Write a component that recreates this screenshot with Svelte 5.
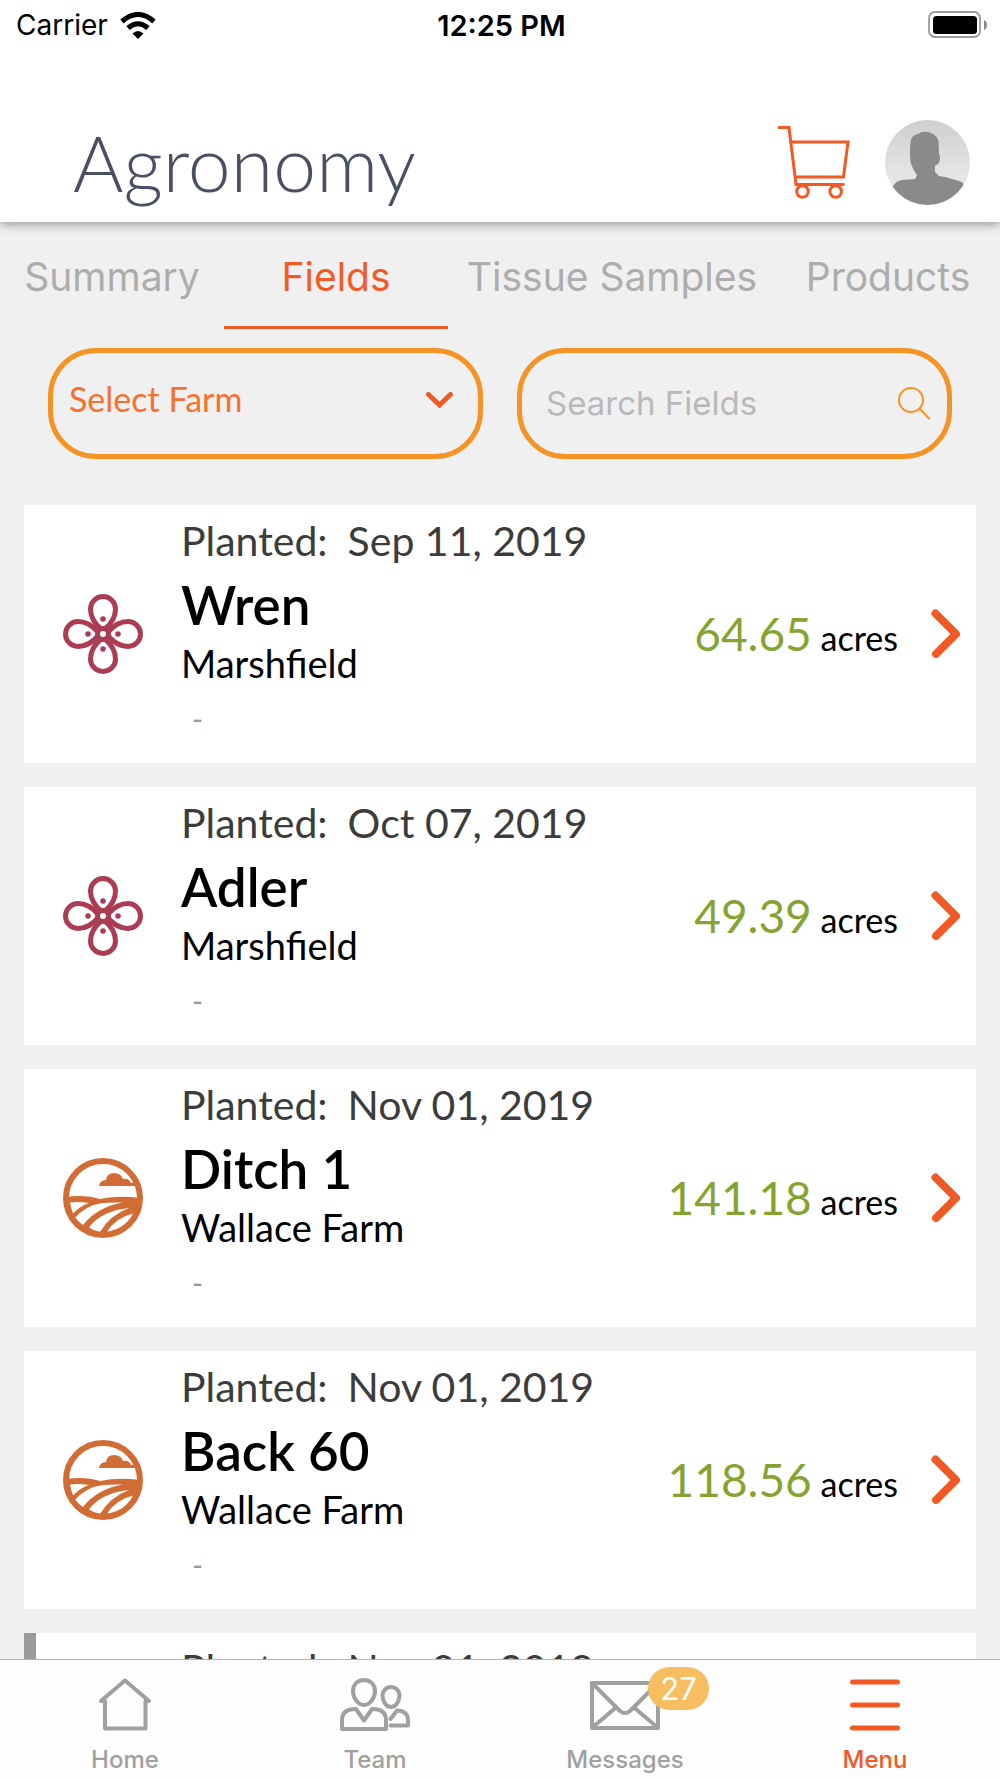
<script lang="ts">
  interface Field {
    planted: string;
    name?: string;
    farm?: string;
    acres?: string;
    crop: "cotton" | "land";
    flagged?: boolean;
  }

  const tabs = ["Summary", "Fields", "Tissue Samples", "Products"];
  const nav = ["Home", "Team", "Messages", "Menu"];

  const fields: Field[] = [
    { planted: "Sep 11, 2019", name: "Wren", farm: "Marshfield", acres: "64.65", crop: "cotton" },
    { planted: "Oct 07, 2019", name: "Adler", farm: "Marshfield", acres: "49.39", crop: "cotton" },
    { planted: "Nov 01, 2019", name: "Ditch 1", farm: "Wallace Farm", acres: "141.18", crop: "land" },
    { planted: "Nov 01, 2019", name: "Back 60", farm: "Wallace Farm", acres: "118.56", crop: "land" },
    { planted: "Nov 01, 2019", crop: "land", flagged: true },
  ];

  let activeTab = $state("Fields");
  let activeNav = $state("Menu");
  let farm = $state("");
  let query = $state("");
  let unread = 27;

  let visible = $derived(
    fields.filter(
      (f) => (!farm || f.farm === farm) && (f.name ?? "").toLowerCase().includes(query.toLowerCase())
    )
  );
</script>

<div class="app">
  <header class="top">
    <div class="status">
      <span class="status__carrier">
        Carrier
        <svg class="wifi" viewBox="0 0 36 27" aria-hidden="true">
          <path d="M2 9.500 Q18 -4.500 34 9.500" />
          <path d="M8 16 Q18 7.500 28 16" />
          <path class="wifi__dot" d="M12.500 21.500 Q18 16.500 23.500 21.500 L18 27 Z" />
        </svg>
      </span>
      <span class="status__time">12:25 PM</span>
      <svg class="battery" viewBox="0 0 59 28" aria-hidden="true">
        <rect x="1" y="1" width="51" height="25" rx="6" fill="#fff" stroke="#999" stroke-width="1.800" />
        <rect x="5" y="5" width="44" height="18" rx="3.500" />
        <path d="M56 9 Q59 10.500 59 14 T56 19 Z" fill="#888" />
      </svg>
    </div>

    <div class="title">
      <h1>Agronomy</h1>
      <button type="button" class="plain" aria-label="Cart">
        <svg class="cart" viewBox="0 0 72 73" aria-hidden="true">
          <path d="M0 1.500 H11 L18 58.500 H66.500 M13 16 H70 L65.500 51 H17" />
          <circle cx="24.500" cy="65.500" r="5.800" />
          <circle cx="57.700" cy="65.500" r="5.800" />
        </svg>
      </button>
      <button type="button" class="plain" aria-label="Profile">
        <svg class="avatar" viewBox="0 0 85 85" aria-hidden="true">
          <defs>
            <linearGradient id="avatar-bg" x1="0" y1="0" x2="0" y2="1">
              <stop offset="0" stop-color="#cfcfcf" />
              <stop offset="0.800" stop-color="#eaeaea" />
            </linearGradient>
            <clipPath id="avatar-clip"><circle cx="42.500" cy="42.500" r="42.500" /></clipPath>
          </defs>
          <g clip-path="url(#avatar-clip)">
            <rect width="85" height="85" fill="url(#avatar-bg)" />
            <path
              fill="#8a8a8a"
              d="M32 55 Q27 48 25.500 42 Q24 30 26 20 Q27 15 33 14 Q38 10.500 45 12.500 Q52 15 53.500 21 L54 34 Q56 37 54 43 L50 46 V52 L54 56 Q62 57 67 59 Q75 61 78 63 L85 85 H0 L8 66 Q11 61 17 60 L30 59 Z"
            />
          </g>
        </svg>
      </button>
    </div>
  </header>

  <div class="tabs" role="tablist">
    {#each tabs as tab (tab)}
      <button
        type="button"
        class="tab"
        class:tab--active={tab === activeTab}
        role="tab"
        aria-selected={tab === activeTab}
        onclick={() => (activeTab = tab)}
      >
        {tab}
      </button>
    {/each}
  </div>

  <div class="filters">
    <div class="pill">
      <select class="pill__select" bind:value={farm} aria-label="Farm">
        <option value="">Select Farm</option>
        <option>Marshfield</option>
        <option>Wallace Farm</option>
      </select>
      <svg class="caret" viewBox="0 0 27 16" aria-hidden="true">
        <path d="M2.500 2.500 L13.500 13 L24.500 2.500" />
      </svg>
    </div>
    <div class="pill">
      <input class="pill__input" type="text" placeholder="Search Fields" bind:value={query} aria-label="Search Fields" />
      <svg class="lens" viewBox="0 0 32 33" aria-hidden="true">
        <circle cx="13" cy="13" r="12" />
        <path d="M21.500 21.500 L31 31.500" />
      </svg>
    </div>
  </div>

  <main class="list">
    {#each visible as field}
      <a class="card" class:card--flagged={field.flagged} href="#field">
        {#if field.crop === "cotton"}
          <svg class="crop" viewBox="0 0 80 80" aria-hidden="true">
            {#each [0, 90, 180, 270] as angle}
              <g transform="rotate({angle} 40 40)">
                <path
                  d="M38 35 C31 29 27.500 21 27.500 15 a12.500 12.500 0 0 1 25 0 C52.500 21 49 29 42 35"
                  fill="none"
                  stroke="#aa3c54"
                  stroke-width="5"
                />
                <circle cx="40" cy="25" r="2.800" fill="#aa3c54" />
              </g>
            {/each}
            <circle cx="40" cy="40" r="5.500" fill="#fff" stroke="#aa3c54" stroke-width="5" />
          </svg>
        {:else}
          <svg class="crop" viewBox="0 0 80 80" aria-hidden="true">
            <path
              fill="#d16c35"
              d="M3 39 Q22 36 37 41 Q56 37 77 40 A37 37 0 0 1 3 41 Z M36 28 Q37 22 43 22 Q44 15 51 15 Q58 15 60 21 Q66 20 68 25 L72 24 L74 28 Z"
            />
            <g fill="#fff">
              <path d="M7 44.500 Q16 43.500 26 45 Q17 48 10 55.500 Q8 50 7 44.500 Z" />
              <path d="M12 60 Q22 48 37 45.500 Q48 44 60 44.500 Q34 49 20 67 Q15 64 12 60 Z" />
              <path d="M26 69.500 Q38 53 66 50 Q47 57 37 74 Q31 73 26 69.500 Z" />
              <path d="M44 74 Q52 60 70 55.500 Q64 71 44 74 Z" />
            </g>
            <circle cx="40" cy="40" r="37" fill="none" stroke="#d16c35" stroke-width="6" />
          </svg>
        {/if}
        <div class="info">
          <p class="info__planted"><span>Planted:</span><span>{field.planted}</span></p>
          <h2 class="info__name">{field.name}</h2>
          <p class="info__farm">{field.farm}</p>
          <p class="info__note">{field.name ? "-" : ""}</p>
        </div>
        {#if field.acres}
          <p class="area"><span class="area__value">{field.acres}</span> acres</p>
        {/if}
        <svg class="chevron" viewBox="0 0 30 50" aria-hidden="true">
          <path d="M4.500 4.500 L25 25 L5 45" />
        </svg>
      </a>
    {/each}
  </main>

  <nav class="bar">
    {#each nav as item (item)}
      <button
        type="button"
        class="bar__item"
        class:bar__item--active={item === activeNav}
        onclick={() => (activeNav = item)}
      >
        <span class="bar__icon">
          {#if item === "Home"}
            <svg width="52" height="53" viewBox="0 0 52 53" aria-hidden="true">
              <path d="M2 23 L26 2.500 L50 23 H46.500 V50.500 H6 V23 Z" />
            </svg>
          {:else if item === "Team"}
            <svg width="70" height="53" viewBox="0 0 70 53" aria-hidden="true">
              <path d="M24 2 C31 2 35 7 35 13 C35 20 30 27 24 27 S13 20 13 13 C13 7 17 2 24 2 Z" />
              <path d="M2 51 V42 C2 34 8 31 16 31 L24 42.500 L32 31 C40 31 46 34 46 42 V51 Z" />
              <path d="M51 9 C56 9 59.500 13 59.500 17.500 C59.500 23 56 29 51 29 S42.500 23 42.500 17.500 C42.500 13 46 9 51 9 Z" />
              <path d="M50.500 41 L57 32.500 C64 32.500 68 36 68 42 V47.500 H50.500" />
            </svg>
          {:else if item === "Messages"}
            <svg width="70" height="53" viewBox="0 0 70 53" aria-hidden="true">
              <rect x="2" y="5" width="66" height="45" />
              <path d="M2 5 L30 33 Q35 37 40 33 L68 5 M3 49 L26 29.500 M67 49 L44 29.500" />
            </svg>
            <span class="badge">{unread}</span>
          {:else}
            <svg width="50" height="53" viewBox="0 0 50 53" aria-hidden="true">
              <path d="M2.500 4 H47.500 M2.500 27 H47.500 M2.500 50 H47.500" stroke-width="5" />
            </svg>
          {/if}
        </span>
        {item}
      </button>
    {/each}
  </nav>
</div>

<style>
  :global(body) {
    margin: 0;
    background: #f0f0f0;
  }

  .app {
    display: flex;
    flex-direction: column;
    height: 100vh;
    overflow: hidden;
    font-family: Lato, "Open Sans", sans-serif;
    color: #000;
  }

  .app * {
    box-sizing: border-box;
  }

  h1,
  h2,
  p {
    margin: 0;
    font-weight: 400;
  }

  button {
    border: 0;
    background: none;
    cursor: pointer;
  }

  svg {
    display: block;
    flex: none;
  }

  /* ── Header ── */
  .top {
    position: relative;
    background: #fff;
    box-shadow: 0 2px 10px rgba(0, 0, 0, 0.4);
  }

  .status {
    display: grid;
    grid-template-columns: 1fr auto 1fr;
    align-items: center;
    height: 50px;
    padding: 0 13px 0 16px;
    font-family: Inter, sans-serif;
    font-size: 28px;
  }

  .status__carrier {
    display: flex;
    align-items: center;
    gap: 12px;
  }

  .status__time {
    font-size: 29px;
    font-weight: 600;
  }

  .wifi {
    width: 36px;
    height: 27px;
    fill: none;
    stroke: #000;
    stroke-width: 5;
  }

  .wifi__dot {
    fill: #000;
    stroke: none;
  }

  .battery {
    width: 59px;
    height: 28px;
    justify-self: end;
  }

  .title {
    display: flex;
    align-items: center;
    gap: 35px;
    padding: 66px 30px 14px 73px;
  }

  .title h1 {
    flex: 1;
    font-size: 77px;
    font-weight: 300;
    line-height: 92px;
    color: #4a5064;
  }

  .plain {
    padding: 0;
  }

  .cart {
    width: 72px;
    height: 73px;
    fill: none;
    stroke: #f15a24;
    stroke-width: 3;
  }

  .avatar {
    width: 85px;
    height: 85px;
  }

  /* ── Tabs ── */
  .tabs {
    display: grid;
    grid-template-columns: 56fr 56fr 82fr 56fr;
    height: 107px;
  }

  .tab {
    padding: 4px 0 0;
    border-bottom: 3px solid transparent;
    font-family: Inter, sans-serif;
    font-size: 39px;
    white-space: nowrap;
    color: #adadad;
  }

  .tab--active {
    border-color: #f15a24;
    color: #f15a24;
  }

  /* ── Filters ── */
  .filters {
    display: grid;
    grid-template-columns: repeat(2, minmax(0, 1fr));
    gap: 34px;
    padding: 19px 48px 46px;
  }

  .pill {
    display: flex;
    align-items: center;
    height: 111px;
    padding: 0 17px 0 16px;
    border: 5px solid #f59324;
    border-radius: 48px;
  }

  .pill__select,
  .pill__input {
    flex: 1;
    min-width: 0;
    height: 100%;
    padding: 0;
    border: 0;
    outline: 0;
    background: none;
  }

  .pill__select {
    appearance: none;
    padding-bottom: 10px;
    font-family: Lato, sans-serif;
    font-size: 34px;
    color: #f7702e;
  }

  .pill__input {
    padding: 0 0 2px 8px;
    font-family: Inter, sans-serif;
    font-size: 33px;
  }

  .pill__input::placeholder {
    color: #b9b9bb;
    opacity: 1;
  }

  .caret {
    width: 27px;
    height: 16px;
    margin: 0 8px 8px 0;
    fill: none;
    stroke: #f15a24;
    stroke-width: 5;
    stroke-linecap: round;
  }

  .lens {
    width: 32px;
    height: 33px;
    fill: none;
    stroke: #f59324;
    stroke-width: 2;
    stroke-linecap: round;
  }

  /* ── Field cards ── */
  .list {
    display: flex;
    flex: 1;
    flex-direction: column;
    gap: 24px;
    min-height: 0;
    padding: 0 24px;
    overflow: hidden;
  }

  .card {
    display: flex;
    flex: none;
    align-items: center;
    padding: 8px 15px 12px 39px;
    background: #fff;
    color: inherit;
    text-decoration: none;
  }

  .card--flagged {
    box-shadow: inset 12px 0 #9b9b9b;
  }

  .crop {
    width: 80px;
    height: 80px;
    margin: 4px 38px 0 0;
  }

  .info {
    flex: 1;
    min-width: 0;
  }

  .info__planted {
    display: flex;
    gap: 20px;
    font-size: 41px;
    line-height: 56px;
    color: #3c3c3c;
  }

  .info__name {
    min-height: 72px;
    font-size: 53px;
    font-weight: 600;
    line-height: 72px;
  }

  .info__farm {
    min-height: 44px;
    font-size: 38px;
    line-height: 44px;
  }

  .info__note {
    min-height: 66px;
    padding-left: 11px;
    font-size: 30px;
    line-height: 66px;
    color: #999;
  }

  .area {
    padding-top: 8px;
    font-size: 34px;
    line-height: 56px;
    white-space: nowrap;
  }

  .area__value {
    font-size: 46px;
    color: #86a332;
  }

  .chevron {
    width: 30px;
    height: 50px;
    margin: 4px 0 0 33px;
    fill: none;
    stroke: #f15a24;
    stroke-width: 8;
    stroke-linecap: round;
    stroke-linejoin: round;
  }

  /* ── Bottom bar ── */
  .bar {
    display: grid;
    grid-template-columns: repeat(4, 1fr);
    border-top: 1px solid #b2b2b2;
    background: #fdfdfd;
  }

  .bar__item {
    display: flex;
    flex-direction: column;
    align-items: center;
    gap: 15px;
    padding: 18px 0 4px;
    font-family: Inter, sans-serif;
    font-size: 24px;
    font-weight: 500;
    line-height: 28px;
    color: #a0a0a0;
  }

  .bar__item--active {
    color: #f15a24;
  }

  .bar__icon {
    position: relative;
  }

  .bar__icon svg {
    fill: none;
    stroke: currentColor;
    stroke-width: 4;
    stroke-linecap: round;
    stroke-linejoin: round;
  }

  .badge {
    position: absolute;
    top: -11px;
    left: 58px;
    width: 61px;
    border-radius: 22px;
    background: #f6be60;
    font-size: 31px;
    font-weight: 400;
    line-height: 43px;
    text-align: center;
    color: #fff;
  }
</style>
